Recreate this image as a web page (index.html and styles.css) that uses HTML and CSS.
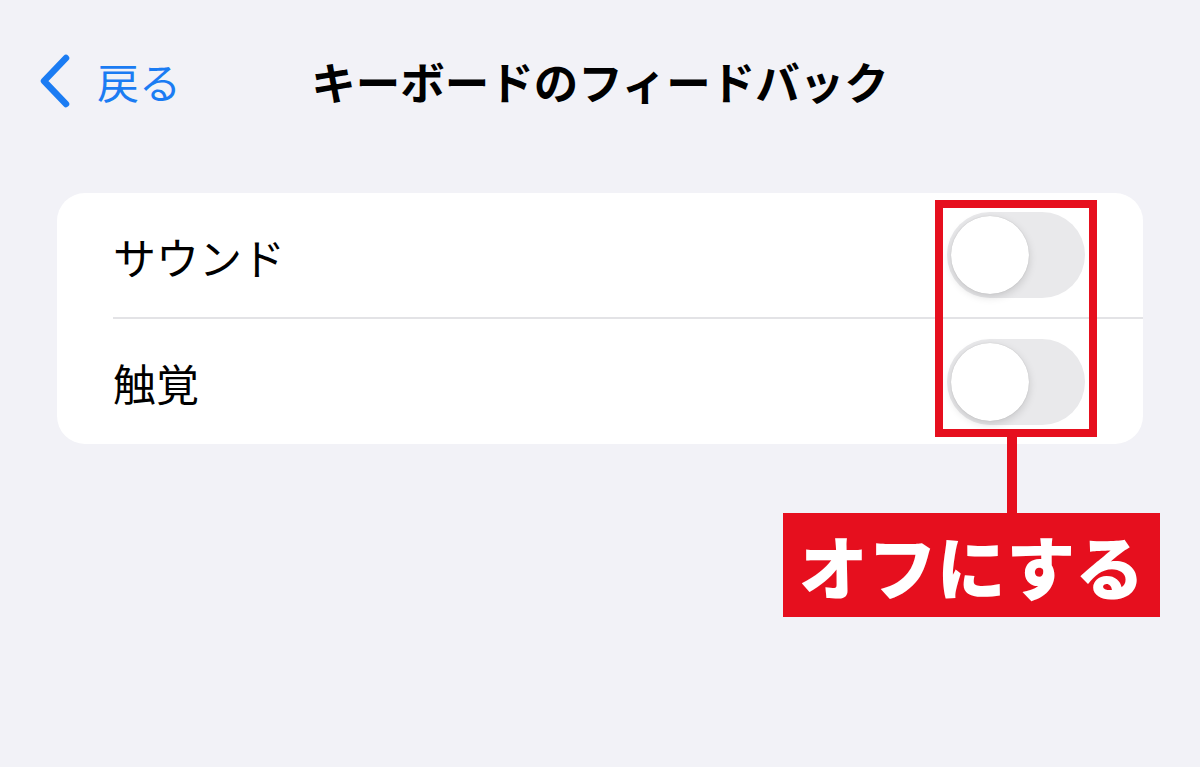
FILE: index.html
```html
<!DOCTYPE html>
<html lang="ja">
<head>
    <meta charset="UTF-8">
    <meta name="viewport" content="width=device-width, initial-scale=1.0">
    <title>キーボードのフィードバック</title>
    <link rel="stylesheet" href="styles.css">
</head>
<body>
    <div class="screen">
        <header class="nav">
            <a class="back" href="#">
                <svg class="chevron" width="34" height="54" viewBox="0 0 34 54">
                    <path d="M29 4 L7 27 L29 50" fill="none" stroke="#1b7cf3" stroke-width="6.5" stroke-linecap="round" stroke-linejoin="round"/>
                </svg>
                <span>戻る</span>
            </a>
            <h1 class="title">キーボードのフィードバック</h1>
        </header>

        <div class="group">
            <div class="row">
                <span class="label">サウンド</span>
                <div class="switch"><div class="knob"></div></div>
            </div>
            <div class="row">
                <span class="label">触覚</span>
                <div class="switch"><div class="knob"></div></div>
            </div>
        </div>

        <!-- annotation over the screenshot -->
        <div class="mark-box"></div>
        <div class="mark-line"></div>
        <div class="mark-label">オフにする</div>
    </div>
</body>
</html>
```

FILE: styles.css
```css
body {
    margin: 0;
    background-color: #f2f2f7;
    font-family: "Noto Sans CJK JP", "Noto Sans", sans-serif;
    color: #000;
}
.screen {
    position: relative;
    width: 1200px;
    height: 767px;
    overflow: hidden;
}
.nav {
    position: relative;
    height: 162px;
    display: flex;
    align-items: center;
    justify-content: center;
}
.back {
    position: absolute;
    left: 37px;
    top: 54px;
    display: flex;
    align-items: center;
    gap: 26px;
    color: #1b7cf3;
    text-decoration: none;
    font-size: 42px;
    line-height: 54px;
}
.chevron {
    display: block;
}
.title {
    margin: 0;
    font-size: 44.5px;
    font-weight: 700;
    line-height: 1;
    letter-spacing: 0;
}
.group {
    margin: 31px 57px 0;
    background-color: #fff;
    border-radius: 28px;
    overflow: hidden;
}
.row {
    height: 124px;
    display: flex;
    align-items: center;
    justify-content: space-between;
    padding: 0 58px 0 56px;
}
.row + .row {
    border-top: 2px solid #e3e3e6;
    margin-left: 56px;
    padding-left: 0;
    height: 125px;
}
.label {
    font-size: 43px;
    line-height: 1;
    padding-top: 2px;
}
.switch {
    width: 138px;
    height: 86px;
    border-radius: 43px;
    background-color: #e9e9eb;
    position: relative;
}
.knob {
    position: absolute;
    left: 4px;
    top: 4px;
    width: 78px;
    height: 78px;
    border-radius: 50%;
    background-color: #fff;
    box-shadow: 0 3px 8px rgba(0,0,0,0.15), 0 0 1px rgba(0,0,0,0.2);
}
.mark-box {
    position: absolute;
    left: 935px;
    top: 200px;
    width: 146px;
    height: 221px;
    border: 8px solid #e60f1e;
}
.mark-line {
    position: absolute;
    left: 1007px;
    top: 437px;
    width: 10px;
    height: 76px;
    background-color: #e60f1e;
}
.mark-label {
    position: absolute;
    left: 783px;
    top: 513px;
    width: 377px;
    height: 104px;
    background-color: #e60f1e;
    color: #fff;
    font-size: 69px;
    font-weight: 900;
    line-height: 104px;
    text-align: center;
    letter-spacing: 0;
}
```
